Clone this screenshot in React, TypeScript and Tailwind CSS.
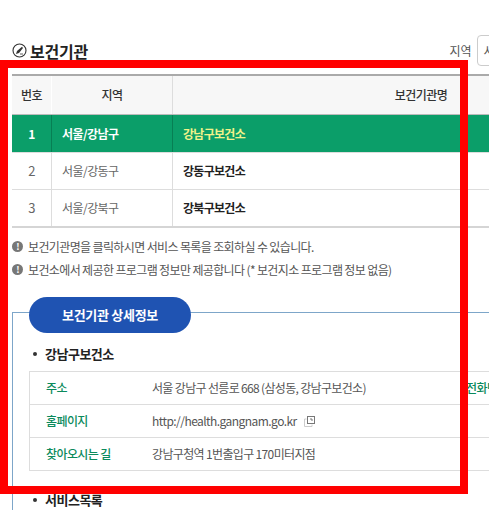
const rows = [
  { no: "1", area: "서울/강남구", name: "강남구보건소", active: true },
  { no: "2", area: "서울/강동구", name: "강동구보건소", active: false },
  { no: "3", area: "서울/강북구", name: "강북구보건소", active: false },
];

const notes = [
  "보건기관명을 클릭하시면 서비스 목록을 조회하실 수 있습니다.",
  "보건소에서 제공한 프로그램 정보만 제공합니다 (* 보건지소 프로그램 정보 없음)",
];

const Note = ({ text }: { text: string }) => (
  <p className="flex items-center h-[23px] text-[12px] tracking-[-0.63px] text-[#555]">
    <span className="flex items-center justify-center w-[11px] h-[11px] mr-[5px] rounded-full bg-[#777] text-white text-[9px] font-bold leading-none">
      !
    </span>
    {text}
  </p>
);

export default function App() {
  return (
    <div
      className="relative w-[489px] h-[517px] overflow-hidden bg-white"
      style={{ fontFamily: '"Noto Sans CJK KR", "Noto Sans", sans-serif' }}
    >
      <div className="w-[760px] pl-3 pt-[35px]">
        {/* title */}
        <div className="flex items-center h-[31px] mb-2">
          <svg width="15" height="15" viewBox="0 0 15 15" fill="none" className="mr-[3px]">
            <circle cx="7.5" cy="7.5" r="6.5" stroke="#333" strokeWidth="1.1" />
            <path d="M4 11 L5 8 L10 3.8 L11 5 L7 10 Z" fill="#333" />
            <path d="M8 11 H11" stroke="#333" strokeWidth="0.8" />
          </svg>
          <h2 className="w-[420px] text-[16px] font-bold tracking-[-0.2px] text-[#222]">보건기관</h2>
          <span className="w-[27px] ml-[-0.5px] text-[12px] text-[#555]">지역</span>
          <div className="flex items-center w-[120px] h-[31px] pl-[6px] border border-[#ccc] rounded-[4px] text-[12px] text-[#555]">
            서울
          </div>
        </div>

        {/* list table */}
        <div className="border-t-2 border-b-2 border-t-[#aaa] border-b-[#d5d5d5] w-[700px] text-[12px] tracking-[-0.55px]">
          <div className="flex h-[39px] bg-[#f7f7f7] border-b border-[#bbb] text-[#333] font-medium">
            <div className="flex items-center justify-center shrink-0 w-[40px] border-r border-white">번호</div>
            <div className="flex items-center justify-center shrink-0 w-[121px] border-r border-[#ddd]">지역</div>
            <div className="flex items-center justify-center shrink-0 w-[496px]">보건기관명</div>
          </div>
          {rows.map((row) => (
            <div
              key={row.no}
              className={
                row.active
                  ? "flex h-[37px] bg-[#0b9e69] text-white font-bold"
                  : "flex h-[37px] border-t border-[#ddd] first:border-t-0 text-[#666]"
              }
            >
              <div
                className={
                  row.active
                    ? "flex items-center justify-center shrink-0 w-[40px] border-r border-[#077f54]"
                    : "flex items-center justify-center shrink-0 w-[40px] border-r border-[#ddd] text-[13px]"
                }
              >
                {row.no}
              </div>
              <div
                className={
                  row.active
                    ? "flex items-center shrink-0 w-[121px] pl-[10px] border-r border-[#077f54]"
                    : "flex items-center shrink-0 w-[121px] pl-[10px] border-r border-[#ddd]"
                }
              >
                {row.area}
              </div>
              <div
                className={
                  row.active
                    ? "flex items-center pl-[10px] tracking-[-0.7px] text-[#f1f28a]"
                    : "flex items-center pl-[10px] tracking-[-0.7px] text-[#222] font-bold"
                }
              >
                {row.name}
              </div>
            </div>
          ))}
        </div>

        {/* notes */}
        <div className="mt-[7px]">
          {notes.map((n) => (
            <Note key={n} text={n} />
          ))}
        </div>

        {/* detail box */}
        <div className="relative mt-[31px] w-[700px] border-t border-l border-[#7da6c9] pl-[16px] pt-[31px]">
          <div className="absolute left-[16px] top-[-16px] flex items-center justify-center w-[162px] h-[36px] rounded-full bg-[#1f53b2] text-white text-[13px] font-bold tracking-[-0.3px]">
            보건기관 상세정보
          </div>
          <h3 className="flex items-center h-[20px] text-[13px] font-bold tracking-[-0.5px] text-[#222]">
            <span className="w-[4px] h-[4px] mr-[8px] ml-[4px] rounded-full bg-[#333]"></span>
            강남구보건소
          </h3>
          <div className="mt-[7px] w-[640px] border border-[#ddd] text-[12px] tracking-[-0.6px] text-[#555]">
            <div className="flex items-center h-[33px] border-b border-[#ddd]">
              <span className="shrink-0 w-[122px] pl-[16px] font-medium text-[#0b8a5c]">주소</span>
              <span className="shrink-0 w-[314px] tracking-[-0.67px]">서울 강남구 선릉로 668 (삼성동, 강남구보건소)</span>
              <span className="font-medium text-[#0b8a5c]">전화번호</span>
            </div>
            <div className="flex items-center h-[33px] border-b border-[#ddd]">
              <span className="shrink-0 w-[122px] pl-[16px] font-medium text-[#0b8a5c]">홈페이지</span>
              <span className="tracking-[-0.55px]">http://health.gangnam.go.kr</span>
              <svg width="11" height="11" viewBox="0 0 11 11" fill="none" className="ml-[7px]">
                <rect x="3.5" y="0.5" width="7" height="7" stroke="#777" />
                <path d="M2.5 3 H0.5 V10.5 H8 V8.5" stroke="#ccc" />
                <path d="M6 3 H8 V5" stroke="#777" />
              </svg>
            </div>
            <div className="flex items-center h-[32px]">
              <span className="shrink-0 w-[122px] pl-[16px] font-medium text-[#0b8a5c]">찾아오시는 길</span>
              <span className="tracking-[-0.65px]">강남구청역 1번출입구 170미터지점</span>
            </div>
          </div>
          <h3 className="flex items-center h-[20px] mt-[19px] text-[13px] font-bold tracking-[-0.5px] text-[#222]">
            <span className="w-[4px] h-[4px] mr-[8px] ml-[4px] rounded-full bg-[#333]"></span>
            서비스목록
          </h3>
        </div>
      </div>

      {/* red highlight frame over the page */}
      <div className="absolute left-0 top-[60px] w-[468px] h-[434px] border-[8px] border-[#ff0000] pointer-events-none"></div>
    </div>
  );
}
